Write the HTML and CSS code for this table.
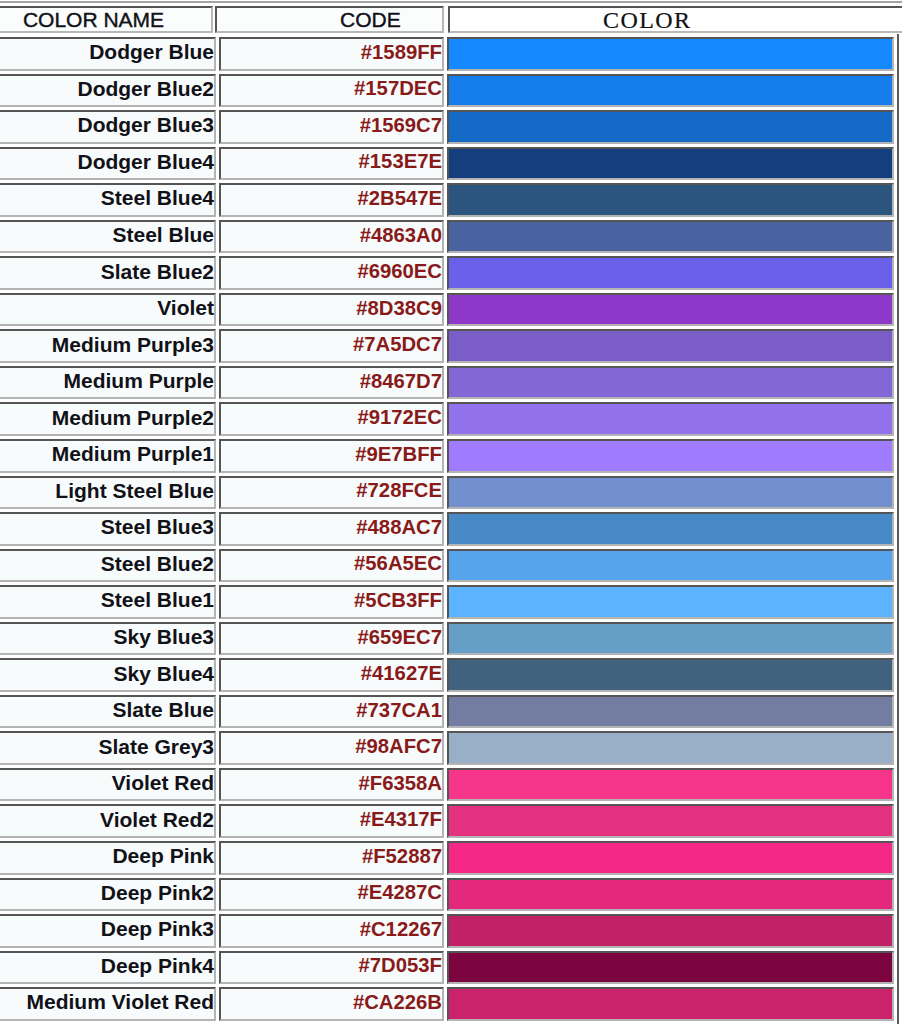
FILE: index.html
```html
<!DOCTYPE html>
<html lang="en">
<head>
<meta charset="utf-8">
<title>Color Codes</title>
<link rel="stylesheet" href="styles.css">
</head>
<body>
<div class="head">
  <div class="hcell hname">COLOR NAME</div>
  <div class="hcell hcode">CODE</div>
  <div class="hcell hcolor">COLOR</div>
</div>
<table class="colors">
  <tbody>
    <tr><td class="name">Dodger Blue</td><td class="code">#1589FF</td><td class="swatch" style="background:#1589FF"></td></tr>
    <tr><td class="name">Dodger Blue2</td><td class="code">#157DEC</td><td class="swatch" style="background:#157DEC"></td></tr>
    <tr><td class="name">Dodger Blue3</td><td class="code">#1569C7</td><td class="swatch" style="background:#1569C7"></td></tr>
    <tr><td class="name">Dodger Blue4</td><td class="code">#153E7E</td><td class="swatch" style="background:#153E7E"></td></tr>
    <tr><td class="name">Steel Blue4</td><td class="code">#2B547E</td><td class="swatch" style="background:#2B547E"></td></tr>
    <tr><td class="name">Steel Blue</td><td class="code">#4863A0</td><td class="swatch" style="background:#4863A0"></td></tr>
    <tr><td class="name">Slate Blue2</td><td class="code">#6960EC</td><td class="swatch" style="background:#6960EC"></td></tr>
    <tr><td class="name">Violet</td><td class="code">#8D38C9</td><td class="swatch" style="background:#8D38C9"></td></tr>
    <tr><td class="name">Medium Purple3</td><td class="code">#7A5DC7</td><td class="swatch" style="background:#7A5DC7"></td></tr>
    <tr><td class="name">Medium Purple</td><td class="code">#8467D7</td><td class="swatch" style="background:#8467D7"></td></tr>
    <tr><td class="name">Medium Purple2</td><td class="code">#9172EC</td><td class="swatch" style="background:#9172EC"></td></tr>
    <tr><td class="name">Medium Purple1</td><td class="code">#9E7BFF</td><td class="swatch" style="background:#9E7BFF"></td></tr>
    <tr><td class="name">Light Steel Blue</td><td class="code">#728FCE</td><td class="swatch" style="background:#728FCE"></td></tr>
    <tr><td class="name">Steel Blue3</td><td class="code">#488AC7</td><td class="swatch" style="background:#488AC7"></td></tr>
    <tr><td class="name">Steel Blue2</td><td class="code">#56A5EC</td><td class="swatch" style="background:#56A5EC"></td></tr>
    <tr><td class="name">Steel Blue1</td><td class="code">#5CB3FF</td><td class="swatch" style="background:#5CB3FF"></td></tr>
    <tr><td class="name">Sky Blue3</td><td class="code">#659EC7</td><td class="swatch" style="background:#659EC7"></td></tr>
    <tr><td class="name">Sky Blue4</td><td class="code">#41627E</td><td class="swatch" style="background:#41627E"></td></tr>
    <tr><td class="name">Slate Blue</td><td class="code">#737CA1</td><td class="swatch" style="background:#737CA1"></td></tr>
    <tr><td class="name">Slate Grey3</td><td class="code">#98AFC7</td><td class="swatch" style="background:#98AFC7"></td></tr>
    <tr><td class="name">Violet Red</td><td class="code">#F6358A</td><td class="swatch" style="background:#F6358A"></td></tr>
    <tr><td class="name">Violet Red2</td><td class="code">#E4317F</td><td class="swatch" style="background:#E4317F"></td></tr>
    <tr><td class="name">Deep Pink</td><td class="code">#F52887</td><td class="swatch" style="background:#F52887"></td></tr>
    <tr><td class="name">Deep Pink2</td><td class="code">#E4287C</td><td class="swatch" style="background:#E4287C"></td></tr>
    <tr><td class="name">Deep Pink3</td><td class="code">#C12267</td><td class="swatch" style="background:#C12267"></td></tr>
    <tr><td class="name">Deep Pink4</td><td class="code">#7D053F</td><td class="swatch" style="background:#7D053F"></td></tr>
    <tr><td class="name">Medium Violet Red</td><td class="code">#CA226B</td><td class="swatch" style="background:#CA226B"></td></tr>
  </tbody>
</table>
</body>
</html>
```
FILE: styles.css
```css
html, body {
  margin: 0;
  padding: 0;
  background: #ffffff;
  overflow-x: hidden;
}

body {
  font-family: "Liberation Sans", Arial, sans-serif;
  color: #111118;
}

.head {
  display: flex;
  margin: 1px -4px 0 -26px;
  padding-top: 3px;
  border-top: 2px solid #a4a4a4;
}

.hcell {
  box-sizing: border-box;
  height: 27px;
  border-width: 2px;
  border-style: solid;
  border-color: #555555 #b8b8b8 #b8b8b8 #555555;
  background: #fbfdfd;
  font-size: 21px;
  line-height: 23px;
  white-space: nowrap;
  overflow: hidden;
  -webkit-text-stroke: 0.4px #111118;
}

.hname {
  width: 239px;
  text-align: center;
}

.hcode {
  width: 229px;
  margin-left: 2px;
  padding-left: 123px;
}

.hcolor {
  flex: 1;
  margin-left: 4px;
  padding-left: 153px;
  padding-top: 2px;
  font-family: "Liberation Serif", "Times New Roman", serif;
  font-size: 24px;
  letter-spacing: 1.4px;
  line-height: 21px;
  color: #111111;
  background: #ffffff;
  -webkit-text-stroke: 0.2px #111111;
}

.colors {
  table-layout: fixed;
  width: 929px;
  margin: 1px 0 0 -30px;
  border-collapse: separate;
  border-spacing: 3px;
  border-style: solid;
  border-width: 0 2px 2px 2px;
  border-color: #5a5a5a #5a5a5a #5a5a5a #c4c4c4;
}

.colors td {
  box-sizing: border-box;
  height: 33.55px;
  padding: 0 0 3px 0;
  border-width: 2px;
  border-style: solid;
  border-color: #555555 #b4b4b4 #b4b4b4 #555555;
  background: #f8fbfb;
  font-weight: bold;
  text-align: right;
  vertical-align: middle;
  white-space: nowrap;
  line-height: normal;
}

.colors td.name {
  width: 241px;
  font-size: 21px;
  color: #111118;
}

.colors td.code {
  width: 225px;
  font-size: 20.3px;
  color: #881a1a;
}

.colors td.swatch {
  width: 447px;
  padding: 0;
}
```
